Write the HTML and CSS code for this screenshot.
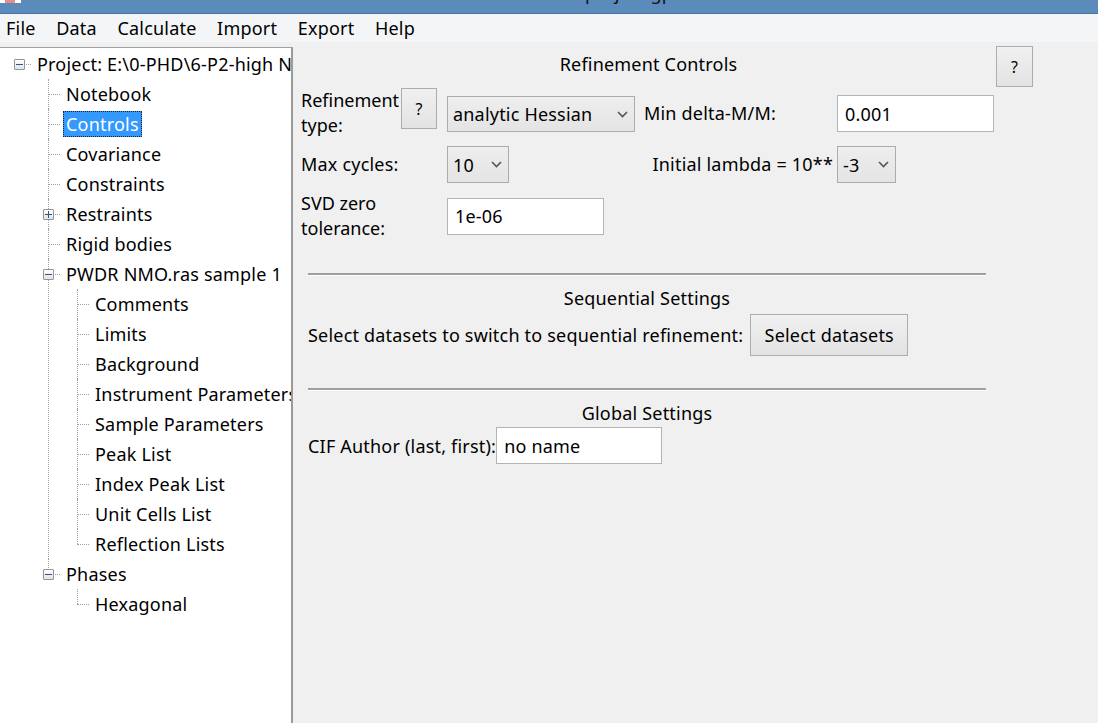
FILE: index.html
```html
<!DOCTYPE html>
<html lang="en">
<head>
<meta charset="utf-8">
<title>GSAS-II</title>
<link rel="stylesheet" href="styles.css">
</head>
<body>
<div class="titlebar"><span class="appicon"></span><span class="title">project.gpx</span></div>
<div class="menubar">
  <span>File</span><span>Data</span><span>Calculate</span><span>Import</span><span>Export</span><span>Help</span>
</div>
<div class="main">
  <div class="tree">
    <ul class="root">
      <li>
        <div class="row"><span class="gut x"><span class="exp"></span></span><span class="lbl">Project: E:\0-PHD\6-P2-high NMO\project.gpx</span></div>
        <ul>
          <li><div class="row"><span class="gut"></span><span class="lbl">Notebook</span></div></li>
          <li><div class="row"><span class="gut"></span><span class="lbl sel">Controls</span></div></li>
          <li><div class="row"><span class="gut"></span><span class="lbl">Covariance</span></div></li>
          <li><div class="row"><span class="gut"></span><span class="lbl">Constraints</span></div></li>
          <li><div class="row"><span class="gut x"><span class="exp plus"></span></span><span class="lbl">Restraints</span></div></li>
          <li><div class="row"><span class="gut"></span><span class="lbl">Rigid bodies</span></div></li>
          <li>
            <div class="row"><span class="gut x"><span class="exp"></span></span><span class="lbl">PWDR NMO.ras sample 1</span></div>
            <ul>
              <li><div class="row"><span class="gut"></span><span class="lbl">Comments</span></div></li>
              <li><div class="row"><span class="gut"></span><span class="lbl">Limits</span></div></li>
              <li><div class="row"><span class="gut"></span><span class="lbl">Background</span></div></li>
              <li><div class="row"><span class="gut"></span><span class="lbl">Instrument Parameters</span></div></li>
              <li><div class="row"><span class="gut"></span><span class="lbl">Sample Parameters</span></div></li>
              <li><div class="row"><span class="gut"></span><span class="lbl">Peak List</span></div></li>
              <li><div class="row"><span class="gut"></span><span class="lbl">Index Peak List</span></div></li>
              <li><div class="row"><span class="gut"></span><span class="lbl">Unit Cells List</span></div></li>
              <li><div class="row"><span class="gut"></span><span class="lbl">Reflection Lists</span></div></li>
            </ul>
          </li>
          <li>
            <div class="row"><span class="gut x"><span class="exp"></span></span><span class="lbl">Phases</span></div>
            <ul>
              <li><div class="row"><span class="gut"></span><span class="lbl">Hexagonal</span></div></li>
            </ul>
          </li>
        </ul>
      </li>
    </ul>
  </div>

  <div class="content">
    <div class="hdr">
      <div class="hdr-title">Refinement Controls</div>
      <button class="btn qbtn">?</button>
    </div>

    <div class="grid">
      <div class="lab2">Refinement<br>type:</div>
      <button class="btn qsmall">?</button>
      <div class="combo c-type"><span>analytic Hessian</span><svg width="11" height="7" viewBox="0 0 11 7"><path d="M1 1 L5.5 5.5 L10 1" fill="none" stroke="#555" stroke-width="1.6"/></svg></div>
      <div class="lab">Min delta-M/M:</div>
      <input class="txt t-delta" type="text" value="0.001">

      <div class="lab span2">Max cycles:</div>
      <div class="combo c-cyc"><span>10</span><svg width="11" height="7" viewBox="0 0 11 7"><path d="M1 1 L5.5 5.5 L10 1" fill="none" stroke="#555" stroke-width="1.6"/></svg></div>
      <div class="lab lam">Initial lambda = 10**</div>
      <div class="combo c-lam"><span>-3</span><svg width="11" height="7" viewBox="0 0 11 7"><path d="M1 1 L5.5 5.5 L10 1" fill="none" stroke="#555" stroke-width="1.6"/></svg></div>

      <div class="lab2 span2">SVD zero<br>tolerance:</div>
      <input class="txt t-svd" type="text" value="1e-06">
    </div>

    <div class="sect">
      <div class="sep"></div>
      <div class="sect-title">Sequential Settings</div>
      <div class="srow">
        <span>Select datasets to switch to sequential refinement:</span>
        <button class="btn selbtn">Select datasets</button>
      </div>
      <div class="sep"></div>
      <div class="sect-title">Global Settings</div>
      <div class="srow crow">
        <span>CIF Author (last, first):</span>
        <input class="txt t-cif" type="text" value="no name">
      </div>
    </div>
  </div>
</div>
</body>
</html>
```
FILE: styles.css
```css
* { box-sizing: border-box; }
html, body { margin: 0; height: 100%; }
body {
  font-family: "Noto Sans", "Open Sans", sans-serif;
  font-size: 18px;
  letter-spacing: 0.2px;
  color: #000;
  background: #f0f0f0;
  display: flex;
  flex-direction: column;
  overflow: hidden;
}

.titlebar {
  height: 14px;
  flex: none;
  background: #5a8bbb;
  border-bottom: 1px solid #46729f;
  display: flex;
  align-items: flex-start;
  overflow: hidden;
}
.appicon {
  width: 21px;
  height: 3px;
  flex: none;
  background: linear-gradient(90deg, #fff 0 5px, #e58c8c 5px 15px, #fff 15px);
}
.title {
  margin-left: 564px;
  margin-top: -17px;
  line-height: 20px;
  white-space: nowrap;
  color: #111;
}

.menubar {
  height: 28px;
  flex: none;
  background: #f4f5f7;
  display: flex;
  align-items: center;
  gap: 20.6px;
  padding-left: 6px;
}

.main { flex: 1; display: flex; min-height: 0; }

/* tree */
.tree {
  width: 293px;
  flex: none;
  margin-top: 5px;
  padding-top: 1px;
  background: #fff;
  border-top: 1px solid #a0a0a0;
  border-right: 2px solid #9a9a9a;
  overflow: hidden;
}
.tree ul { list-style: none; margin: 0; padding: 0; }
.tree ul ul { margin-left: 29px; }
.tree li { position: relative; }
.tree ul ul > li::before {
  content: "";
  position: absolute;
  left: 19px;
  top: 0;
  bottom: 0;
  border-left: 1px dotted #a0a0a0;
}
.tree ul ul > li:last-child::before { bottom: auto; height: 15px; }

.row { display: flex; align-items: center; height: 30px; }
.gut {
  width: 34px;
  height: 100%;
  flex: none;
  display: flex;
  align-items: center;
  padding-left: 19px;
}
.gut::after {
  content: "";
  flex: 1;
  border-top: 1px dotted #a0a0a0;
  margin-right: 3px;
}
.gut.x { padding-left: 14px; }
.exp {
  position: relative;
  z-index: 1;
  width: 11px;
  height: 11px;
  flex: none;
  margin-right: 1px;
  border: 1px solid #959595;
  border-radius: 1px;
  background: linear-gradient(#ffffff, #e2e2e2);
  display: flex;
  align-items: center;
  justify-content: center;
}
.exp::before { content: ""; width: 7px; height: 1px; background: #2f5290; }
.exp.plus::after { content: ""; position: absolute; width: 1px; height: 7px; background: #2f5290; }

.lbl { padding: 0 3px; line-height: 26px; white-space: nowrap; }
.lbl.sel {
  background: #3399ff;
  color: #fff;
  outline: 1px dotted #222;
  outline-offset: -1px;
}

/* content */
.content { flex: 1; padding: 4px 0 0 8px; }
.hdr { display: flex; align-items: flex-start; }
.hdr-title { width: 695px; text-align: center; padding-top: 6px; line-height: 25px; }

.btn {
  font: inherit;
  letter-spacing: inherit;
  color: #000;
  background: linear-gradient(#f0f0f0, #e3e3e3);
  border: 1px solid #adadad;
  padding: 0;
  display: flex;
  align-items: center;
  justify-content: center;
}
.qbtn { width: 37px; height: 41px; font-size: 16px; }

.grid {
  display: grid;
  grid-template-columns: 100px 46px 197px 193px 158px;
  row-gap: 8px;
  align-items: center;
  margin-top: 1px;
}
.lab, .lab2 { line-height: 25px; white-space: nowrap; }
.lab2 { letter-spacing: 0; }
.span2 { grid-column: 1 / 3; }
.qsmall { width: 36px; height: 41px; align-self: start; font-size: 16px; }
.lam { text-align: right; padding-right: 4px; }

.combo {
  height: 36px;
  border: 1px solid #acacac;
  background: linear-gradient(#eeeeee, #e4e4e4);
  display: flex;
  align-items: center;
  justify-content: space-between;
  padding: 0 6px 0 5px;
}
.c-type { width: 188px; margin-top: 2px; }
.c-cyc { width: 62px; height: 37px; }
.c-lam { width: 59px; height: 37px; }

.txt {
  font: inherit;
  letter-spacing: inherit;
  color: #000;
  background: #fff;
  border: 1px solid #b4b4b4;
  padding: 0 7px;
  height: 37px;
  outline: none;
}
.t-delta { width: 157px; margin-top: 1px; }
.t-svd { width: 157px; }
.t-cif { width: 166px; margin-left: 0; }

.sect { margin-left: 7px; width: 678px; }
.sep {
  margin-top: 32px;
  border-top: 2px solid #a0a0a0;
  border-bottom: 1px solid #fff;
}
.sect-title { text-align: center; line-height: 25px; margin-top: 10px; }
.srow { display: flex; align-items: center; margin-top: 3px; }
.selbtn { width: 158px; height: 42px; margin-left: 7px; }
.crow { margin-top: 1px; }
```
